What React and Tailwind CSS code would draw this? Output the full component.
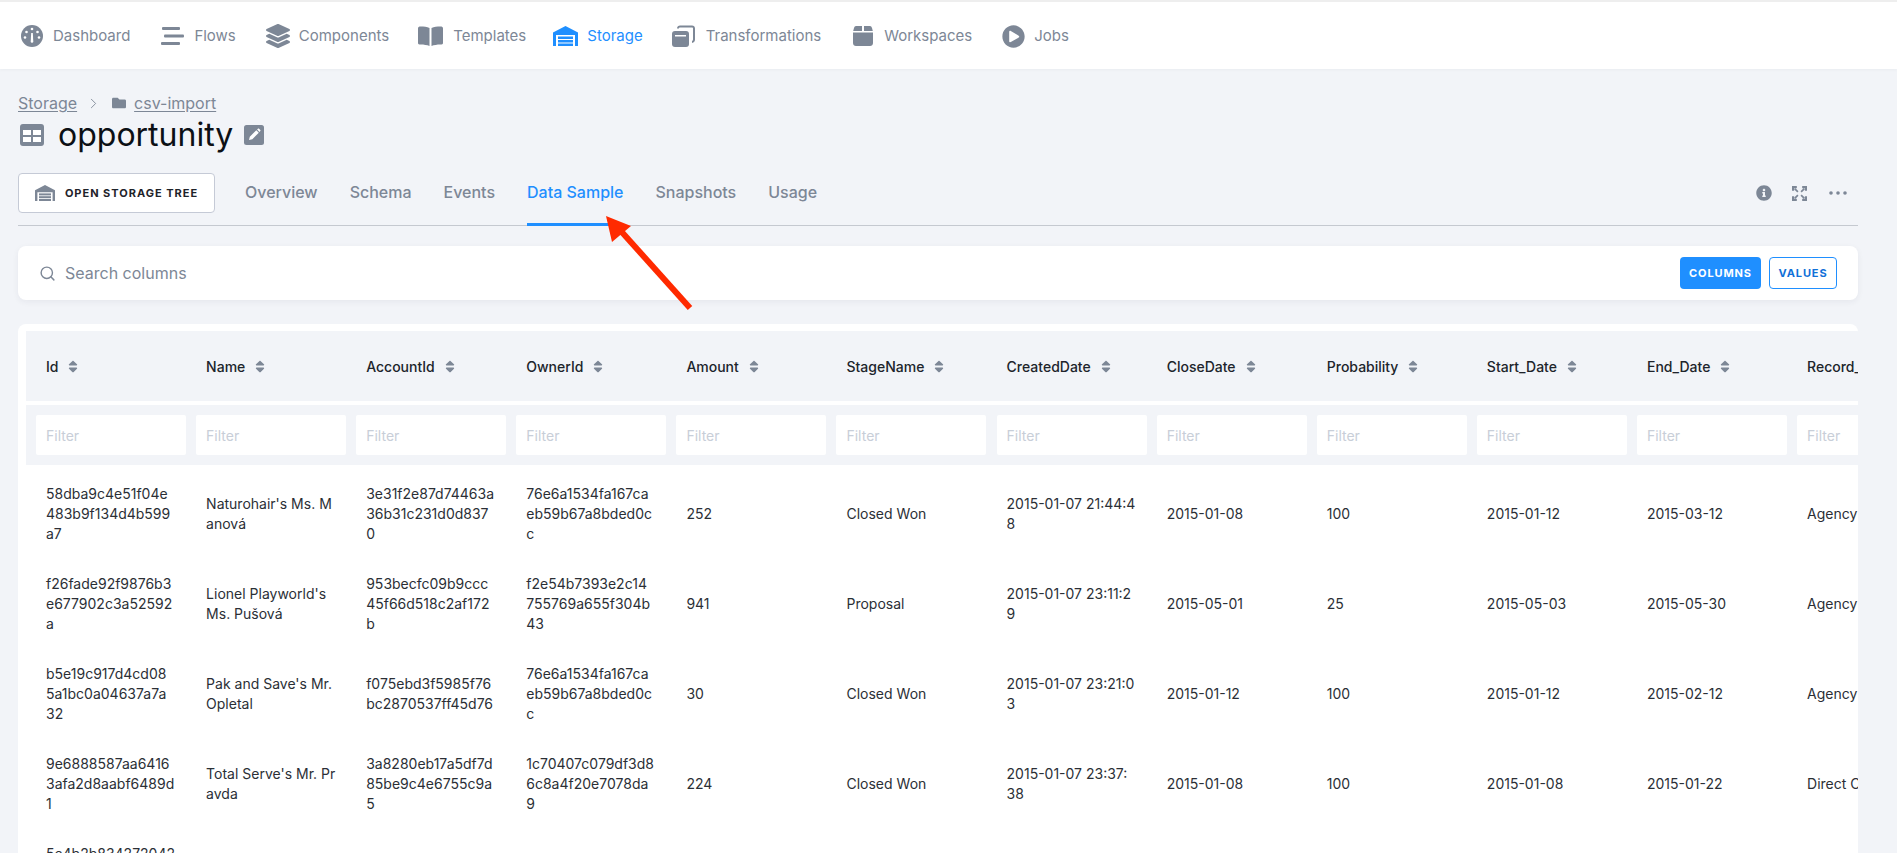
import { Search, ChevronRight } from 'lucide-react';
import { FaSort, FaFolder, FaInfoCircle, FaLayerGroup, FaPlayCircle } from 'react-icons/fa';

const DashboardIcon = () => (
    <svg viewBox="0 0 22 22" className="w-[22px] h-[22px]" fill="currentColor">
        <circle cx="11" cy="11" r="11" />
        <circle cx="11" cy="4" r="1.3" fill="#fff" />
        <circle cx="5.5" cy="7" r="1.3" fill="#fff" />
        <circle cx="16.5" cy="7" r="1.3" fill="#fff" />
        <circle cx="4" cy="12.5" r="1.3" fill="#fff" />
        <circle cx="18" cy="12.5" r="1.3" fill="#fff" />
        <path d="M10.2 8h1.6l.5 8.5a1.3 1.3 0 0 1-2.6 0z" fill="#fff" />
    </svg>
);

const FlowsIcon = () => (
    <svg viewBox="0 0 23 20" className="w-[23px] h-[20px]" fill="currentColor">
        <rect x="1" y="1" width="18" height="3" rx="1" />
        <rect x="3" y="8.5" width="20" height="3" rx="1" />
        <rect x="0" y="16" width="19" height="3" rx="1" />
    </svg>
);

const TemplatesIcon = () => (
    <svg viewBox="0 0 25 20" className="w-[25px] h-[20px]" fill="currentColor">
        <path d="M0 2.5C0 1 1 .5 2.5.5c3.500 0 6.500.3 9 1.500v18c-2.500-1-5.500-1.500-9-1.500-1.500 0-2.500-.5-2.500-1.500z" />
        <path d="M25 2.500C25 1 24 .5 22.500.5c-3.500 0-6.500.3-9 1.500v18c2.500-1 5.500-1.500 9-1.500 1.500 0 2.500-.5 2.500-1.500z" />
    </svg>
);

const WarehouseIcon = ({ className }) => (
    <svg viewBox="0 0 25 20" className={className} fill="currentColor">
        <path d="M0 6.500 12.500 0 25 6.500V20h-3V9H3v11H0z" />
        <rect x="5" y="10.500" width="15" height="2.500" />
        <rect x="5" y="14" width="15" height="2.500" />
        <rect x="5" y="17.500" width="15" height="2.500" />
    </svg>
);

const TransformationsIcon = () => (
    <svg viewBox="0 0 23 22" className="w-[23px] h-[22px]" fill="currentColor">
        <rect x="0" y="6" width="17" height="16" rx="3" />
        <rect x="3" y="10" width="11" height="1.500" fill="#fff" />
        <path d="M5 3.500C5 1.500 6.500.5 8 .5h12c1.800 0 3 1.200 3 3v11c0 1.800-1 3-3 3.500v-2c.6-.2 1-.7 1-1.500v-11c0-.6-.4-1-1-1H8c-.6 0-1 .4-1 1z" />
    </svg>
);

const WorkspacesIcon = () => (
    <svg viewBox="0 0 20 20" className="w-[20px] h-[20px]" fill="currentColor">
        <path d="M3 0h6v5H0.200L1 2C1.400.7 2 0 3 0zM11 0h6c1 0 1.600.7 2 2l.8 3H11zM0 6.500h20V17c0 1.700-1.300 3-3 3H3c-1.700 0-3-1.300-3-3z" />
    </svg>
);

const TableIcon = () => (
    <svg viewBox="0 0 24 22" className="w-[24px] h-[22px]">
        <rect width="24" height="22" rx="3" fill="#7d8796" />
        <rect x="3" y="6" width="8" height="5" fill="#fff" />
        <rect x="13" y="6" width="8" height="5" fill="#fff" />
        <rect x="3" y="13" width="8" height="5" fill="#fff" />
        <rect x="13" y="13" width="8" height="5" fill="#fff" />
    </svg>
);

const EditIcon = () => (
    <svg viewBox="0 0 20 20" className="w-[20px] h-[20px]">
        <rect width="20" height="20" rx="2.500" fill="#7d8796" />
        <path d="M5 15l.8-3.300 6.500-6.500 2.500 2.500-6.500 6.500zM13.100 4.500l.8-.8c.4-.3.9-.3 1.200 0l1.200 1.200c.3.300.3.800 0 1.200l-.8.800z" fill="#fff" />
    </svg>
);

const ExpandIcon = () => (
    <svg viewBox="0 0 14 14" className="w-[15px] h-[15px] ml-[20px]" fill="none" stroke="currentColor">
        <path d="M1 4.500V1h3.500M9.500 1H13v3.500M1 9.500V13h3.500M13 9.500V13H9.500" strokeWidth="2" />
        <path d="M2.500 2.500 5.500 5.500M11.500 2.500 8.500 5.500M2.500 11.500l3-3M11.500 11.500l-3-3" strokeWidth="1.600" />
    </svg>
);

const DotsIcon = () => (
    <svg viewBox="0 0 18 4" className="w-[18px] h-[4px] ml-[22px] mr-[11px]" fill="currentColor">
        <circle cx="2" cy="2" r="1.800" />
        <circle cx="9" cy="2" r="1.800" />
        <circle cx="16" cy="2" r="1.800" />
    </svg>
);

const navItems = [
    { label: 'Dashboard', icon: <DashboardIcon />, x: 'w-[32px]', text: 'mr-[31px]' },
    { label: 'Flows', icon: <FlowsIcon />, x: 'w-[33px]', text: 'mr-[30px]' },
    { label: 'Components', icon: <FaLayerGroup className="w-[24px] h-[24px]" />, x: 'w-[33px]', text: 'mr-[29px]' },
    { label: 'Templates', icon: <TemplatesIcon />, x: 'w-[35px]', text: 'mr-[27px]' },
    { label: 'Storage', icon: <WarehouseIcon className="w-[25px] h-[20px]" />, x: 'w-[34px]', active: true, text: 'mr-[29px]' },
    { label: 'Transformations', icon: <TransformationsIcon />, x: 'w-[34px]', text: 'mr-[32px]' },
    { label: 'Workspaces', icon: <WorkspacesIcon />, x: 'w-[31px]', text: 'mr-[30px]' },
    { label: 'Jobs', icon: <FaPlayCircle className="w-[23px] h-[23px]" />, x: 'w-[32px]', text: '' },
];

const tabs = ['Overview', 'Schema', 'Events', 'Data Sample', 'Snapshots', 'Usage'];

const columns = ['Id', 'Name', 'AccountId', 'OwnerId', 'Amount', 'StageName', 'CreatedDate', 'CloseDate', 'Probability', 'Start_Date', 'End_Date', 'Record_Type'];

// line breaks are kept in the values, the long ids wrap mid-word
const rows = [
    ['58dba9c4e51f04e\n483b9f134d4b599\na7', "Naturohair's Ms. M\nanová", '3e31f2e87d74463a\n36b31c231d0d837\n0', '76e6a1534fa167ca\neb59b67a8bded0c\nc', '252', 'Closed Won', '2015-01-07 21:44:4\n8', '2015-01-08', '100', '2015-01-12', '2015-03-12', 'Agency'],
    ['f26fade92f9876b3\ne677902c3a52592\na', "Lionel Playworld's\nMs. Pušová", '953becfc09b9ccc\n45f66d518c2af172\nb', 'f2e54b7393e2c14\n755769a655f304b\n43', '941', 'Proposal', '2015-01-07 23:11:2\n9', '2015-05-01', '25', '2015-05-03', '2015-05-30', 'Agency'],
    ['b5e19c917d4cd08\n5a1bc0a04637a7a\n32', "Pak and Save's Mr.\nOpletal", 'f075ebd3f5985f76\nbc2870537ff45d76', '76e6a1534fa167ca\neb59b67a8bded0c\nc', '30', 'Closed Won', '2015-01-07 23:21:0\n3', '2015-01-12', '100', '2015-01-12', '2015-02-12', 'Agency'],
    ['9e6888587aa6416\n3afa2d8aabf6489d\n1', "Total Serve's Mr. Pr\navda", '3a8280eb17a5df7d\n85be9c4e6755c9a\n5', '1c70407c079df3d8\n6c8a4f20e7078da\n9', '224', 'Closed Won', '2015-01-07 23:37:\n38', '2015-01-08', '100', '2015-01-08', '2015-01-22', 'Direct Customer'],
    ['5c4b2b834272042\na1bc0a04637a7a3\n21', '', '', '', '', '', '', '', '', '', '', ''],
];

const App = () => {
    return (
        <div className="relative h-[853px] overflow-hidden bg-[#f2f4f8] font-['Inter',sans-serif] text-[14px]">
            <header className="h-[69px] bg-white border-t-2 border-[#eeeeee] shadow-[0_1px_3px_rgba(30,40,60,0.04)] flex items-center pl-[21px] pt-[1px] text-[#7d8796]">
                {navItems.map((item) => (
                    <div key={item.label} className={`flex items-center ${item.text} ${item.active ? 'text-[#1f8fff]' : ''}`}>
                        <span className={`${item.x} flex items-center`}>{item.icon}</span>
                        <span className="text-[15px] leading-5">{item.label}</span>
                    </div>
                ))}
            </header>

            <main className="pl-[18px] pr-[39px]">
                <div className="pt-[23px] flex items-center h-[45px] text-[16px] leading-5 text-[#7d8796]">
                    <span className="underline underline-offset-2">Storage</span>
                    <ChevronRight className="w-[17px] h-[17px] ml-[8px] mr-[10px]" strokeWidth={1.25} />
                    <FaFolder className="w-[14px] h-[14px] mr-[8px]" />
                    <span className="underline underline-offset-2">csv-import</span>
                </div>

                <div className="h-[42px] flex items-center">
                    <span className="ml-[2px] w-[38px]"><TableIcon /></span>
                    <h1 className="text-[32px] leading-[42px] text-[#0c1015] font-normal">opportunity</h1>
                    <span className="ml-[11px]"><EditIcon /></span>
                </div>

                <div className="mt-[17px] h-[53px] flex items-start border-b border-[#c5c9d0]">
                    <button className="w-[197px] h-[40px] flex items-center justify-center gap-[10px] bg-white border border-[#c5cad6] rounded-[4px] text-[11px] font-bold tracking-[0.09em] text-[#1f232a]">
                        <WarehouseIcon className="w-[20px] h-[16px] text-[#7d8796]" />
                        OPEN STORAGE TREE
                    </button>
                    <nav className="ml-[30px] flex gap-[32px]">
                        {tabs.map((tab) => (
                            <div
                                key={tab}
                                className={`h-[53px] pt-[9px] leading-5 text-[16px] font-medium ${tab === 'Data Sample' ? 'border-b-[3px] border-[#1f8fff] text-[#1f8fff]' : 'text-[#7d8796]'}`}
                            >
                                {tab}
                            </div>
                        ))}
                    </nav>
                    <div className="ml-auto flex items-center h-[40px] text-[#7d8796]">
                        <FaInfoCircle className="w-[16px] h-[16px]" />
                        <ExpandIcon />
                        <DotsIcon />
                    </div>
                </div>

                <div className="mt-[20px] h-[54px] bg-white rounded-lg shadow-[0_2px_6px_rgba(30,40,60,0.06)] flex items-center pl-[21px] pr-[21px]">
                    <Search className="w-[17px] h-[17px] text-[#7d8796]" strokeWidth={2} />
                    <span className="ml-[9px] text-[16px] text-[#7d8796]">Search columns</span>
                    <button className="ml-auto w-[81px] h-[32px] rounded-[4px] bg-[#1f8fff] text-white text-[11px] font-bold tracking-[0.08em]">COLUMNS</button>
                    <button className="ml-[8px] w-[68px] h-[32px] rounded-[4px] bg-white border border-[#1f8fff] text-[#1170d8] text-[11px] font-bold tracking-[0.08em]">VALUES</button>
                </div>

                <div className="mt-[24px] h-[600px] bg-white rounded-lg overflow-hidden pt-[7px] pl-[8px]">
                    <div className="w-[1922px] h-[70px] bg-[#f2f4f8] grid grid-cols-[repeat(12,160.1px)] items-center text-[#20242b] font-medium">
                        {columns.map((col) => (
                            <div key={col} className="pl-[20px] flex items-center whitespace-nowrap">
                                {col}
                                <FaSort className="w-[12px] h-[15px] ml-[9px] text-[#7d8796]" />
                            </div>
                        ))}
                    </div>
                    <div className="w-[1922px] h-[60px] mt-[4px] bg-[#f2f4f8] grid grid-cols-[repeat(12,160.1px)] items-center">
                        {columns.map((col) => (
                            <div key={col} className="pl-[10px]">
                                <div className="h-[40px] w-[150px] bg-white rounded-[2px] pl-[10px] flex items-center text-[#c8ced8]">Filter</div>
                            </div>
                        ))}
                    </div>
                    <div className="w-[1922px] pt-[4px] text-[#2b2f36]">
                        {rows.map((row) => (
                            <div key={row[0]} className="h-[90px] grid grid-cols-[repeat(12,160.1px)] items-center">
                                {row.map((cell, i) => (
                                    <div key={i} className="pl-[20px] leading-5 whitespace-pre">{cell}</div>
                                ))}
                            </div>
                        ))}
                    </div>
                </div>
            </main>

            <svg viewBox="0 0 1897 853" className="absolute inset-0 w-[1897px] h-[853px] pointer-events-none">
                <path d="M690 308 620 230" stroke="#ff2a00" strokeWidth="6" />
                <path d="M606 216 631 226 612 242z" fill="#ff2a00" />
            </svg>
        </div>
    );
};

export default App;
